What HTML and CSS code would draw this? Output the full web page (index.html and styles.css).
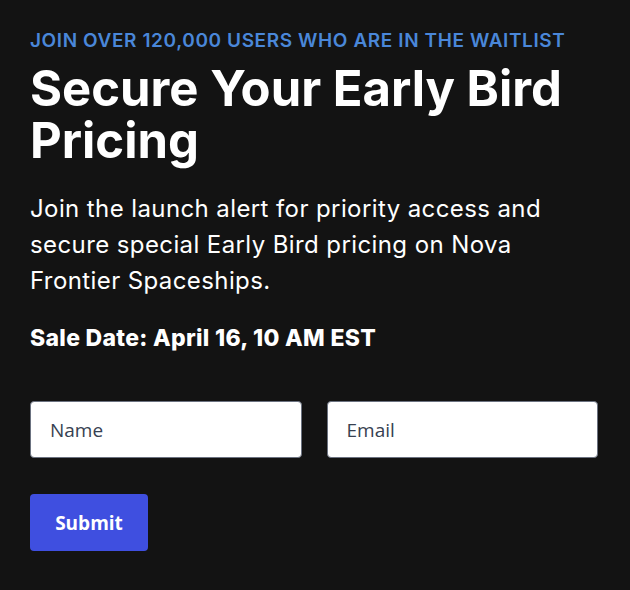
FILE: index.html
```html
<!DOCTYPE html>
<html lang="en">
<head>
<meta charset="utf-8">
<title>Waitlist</title>
<link rel="stylesheet" href="styles.css">
</head>
<body>
<main class="signup">
  <p class="eyebrow">Join over 120,000 users who are in the waitlist</p>
  <h1 class="title">Secure Your Early Bird Pricing</h1>
  <p class="lead">Join the launch alert for priority access and secure special Early Bird pricing on Nova Frontier Spaceships.</p>
  <p class="sale">Sale Date: April 16, 10 AM EST</p>
  <form class="form">
    <div class="fields">
      <input class="field" type="text" placeholder="Name">
      <input class="field" type="email" placeholder="Email">
    </div>
    <button class="submit" type="button">Submit</button>
  </form>
</main>
</body>
</html>
```
FILE: styles.css
```css
* { box-sizing: border-box; }
html, body {
  margin: 0;
  background: #131313;
}
.signup {
  padding: 29px 32px 0 30px;
  font-family: "Inter", "Liberation Sans", sans-serif;
  color: #ffffff;
}
.eyebrow {
  margin: 0;
  font-size: 19px;
  line-height: 24px;
  font-weight: 600;
  text-transform: uppercase;
  color: #4a87d9;
  letter-spacing: 0.6px;
}
.title {
  margin: 10px 0 0;
  font-size: 49px;
  line-height: 52px;
  font-weight: 700;
  letter-spacing: 0;
}
.lead {
  margin: 24px 0 0;
  font-size: 24px;
  line-height: 36px;
  font-weight: 400;
  letter-spacing: 0.4px;
  max-width: 530px;
}
.sale {
  margin: 24px 0 0;
  font-size: 23px;
  line-height: 30px;
  font-weight: 800;
  letter-spacing: 0.3px;
}
.form {
  margin-top: 48px;
}
.fields {
  display: grid;
  grid-template-columns: minmax(0, 1fr) minmax(0, 1fr);
  column-gap: 25px;
}
.field {
  width: 100%;
  min-width: 0;
  height: 57px;
  border: 1px solid #6b7280;
  border-radius: 4px;
  background: #ffffff;
  padding: 0 19px;
  font-family: "Open Sans", "Noto Sans", sans-serif;
  font-size: 19px;
  color: #1f2937;
}
.field::placeholder {
  color: #374151;
  opacity: 1;
}
.submit {
  margin-top: 36px;
  width: 118px;
  height: 57px;
  border: none;
  border-radius: 4px;
  background: #3f4fe0;
  color: #ffffff;
  font-family: "Open Sans", "Noto Sans", sans-serif;
  font-size: 19px;
  font-weight: 700;
}
```
